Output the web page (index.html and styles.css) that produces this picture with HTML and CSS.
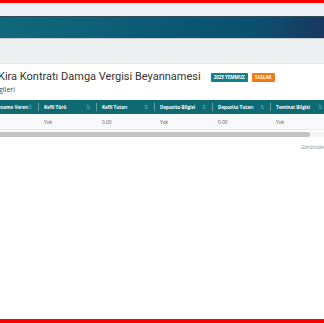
FILE: index.html
```html
<!DOCTYPE html>
<html lang="tr">
<head>
    <meta charset="UTF-8">
    <title>Kira Kontratı Damga Vergisi Beyannamesi</title>
    <link rel="stylesheet" href="styles.css">
</head>
<body>
    <div class="frame">
        <div class="topstrip"></div>
        <div class="navbar"></div>
        <div class="subbar"></div>

        <div class="content">
            <div class="title-row">
                <h1 class="title">Kira Kontratı Damga Vergisi Beyannamesi</h1>
                <span class="badge badge-period">2025 TEMMUZ</span>
                <span class="badge badge-status">TASLAK</span>
            </div>
            <div class="section-sub">Bilgileri</div>

            <div class="table-wrap">
                <div class="row head">
                    <div class="cell">Beyanname Veren <span class="sort">⇅</span></div>
                    <div class="cell">Kefil Türü <span class="sort">⇅</span></div>
                    <div class="cell">Kefil Tutarı <span class="sort">⇅</span></div>
                    <div class="cell">Depozito Bilgisi <span class="sort">⇅</span></div>
                    <div class="cell">Depozito Tutarı <span class="sort">⇅</span></div>
                    <div class="cell">Teminat Bilgisi <span class="sort">⇅</span></div>
                </div>
                <div class="row data">
                    <div class="cell">Kiracı</div>
                    <div class="cell">Yok</div>
                    <div class="cell">0.00</div>
                    <div class="cell">Yok</div>
                    <div class="cell">0.00</div>
                    <div class="cell">Yok</div>
                </div>
            </div>
            <div class="scrollbar"><div class="thumb"></div></div>
            <div class="pager">Görüntülenen 1 - 1 / 1</div>
        </div>
    </div>
</body>
</html>
```

FILE: styles.css
```css
html, body {
    margin: 0;
    padding: 0;
    background-color: white;
    overflow: hidden;
}
body {
    font-family: "Open Sans", Arial, sans-serif;
    color: #333;
}
.frame {
    height: 323px;
    box-sizing: border-box;
    border-top: 3px solid #ff0000;
    border-bottom: 4px solid #ff0000;
    display: flex;
    flex-direction: column;
    overflow: hidden;
}
.topstrip {
    height: 13px;
    background-color: #eef0f8;
}
.navbar {
    height: 21px;
    border-top: 1px solid #2e4c5c;
    background: linear-gradient(to right, #10697a 0%, #0b5874 50%, #0a5170 78%, #183860 100%);
}
.subbar {
    height: 24px;
    border-top: 1px solid #c7cdd1;
    border-bottom: 1px solid #e3e7e8;
    background-color: #edf0f1;
}
.content {
    flex: 1;
    overflow: hidden;
}
.title-row {
    display: flex;
    align-items: center;
    gap: 10px;
    margin-top: 5px;
    margin-left: -2px;
    white-space: nowrap;
}
.title {
    margin: 0;
    font-family: Roboto, "Open Sans", Arial, sans-serif;
    font-size: 11px;
    font-weight: 400;
    color: #333;
    line-height: 16px;
}
.badge {
    font-size: 4.5px;
    font-weight: 700;
    color: white;
    padding: 2px 3px;
    border-radius: 1px;
    line-height: 5px;
}
.badge-period {
    background-color: #14808c;
}
.badge-status {
    margin-left: -6px;
    background-color: #f27a14;
}
.section-sub {
    margin-top: 0;
    margin-left: -9px;
    font-size: 7px;
    color: #444;
    line-height: 9px;
}
.table-wrap {
    margin-top: 6px;
    margin-left: -20px;
    width: 360px;
}
.row {
    display: flex;
}
.cell {
    width: 58px;
    flex: none;
    box-sizing: border-box;
    padding: 0 6px;
    display: flex;
    align-items: center;
    justify-content: space-between;
    white-space: nowrap;
    position: relative;
}
.head {
    height: 14px;
    background-color: #0e6b73;
}
.head .cell {
    font-size: 4.6px;
    font-weight: 700;
    color: white;
}
.head .cell + .cell::before {
    content: "";
    position: absolute;
    left: 0;
    top: 3px;
    bottom: 3px;
    border-left: 1px solid rgba(255, 255, 255, 0.35);
}
.sort {
    font-size: 5px;
    font-weight: 400;
    color: rgba(255, 255, 255, 0.45);
}
.data {
    height: 15px;
    background-color: #f7f9fa;
    border-bottom: 1px solid #e6e9eb;
}
.data .cell {
    font-size: 4.8px;
    color: #555;
}
.scrollbar {
    height: 5px;
    margin-top: 2px;
    background-color: #f4f4f4;
}
.thumb {
    width: 310px;
    height: 5px;
    background-color: #c3c3c3;
    border-radius: 0 3px 3px 0;
}
.pager {
    margin-top: 7px;
    padding-left: 301px;
    font-size: 4.8px;
    color: #888;
    white-space: nowrap;
}
```
